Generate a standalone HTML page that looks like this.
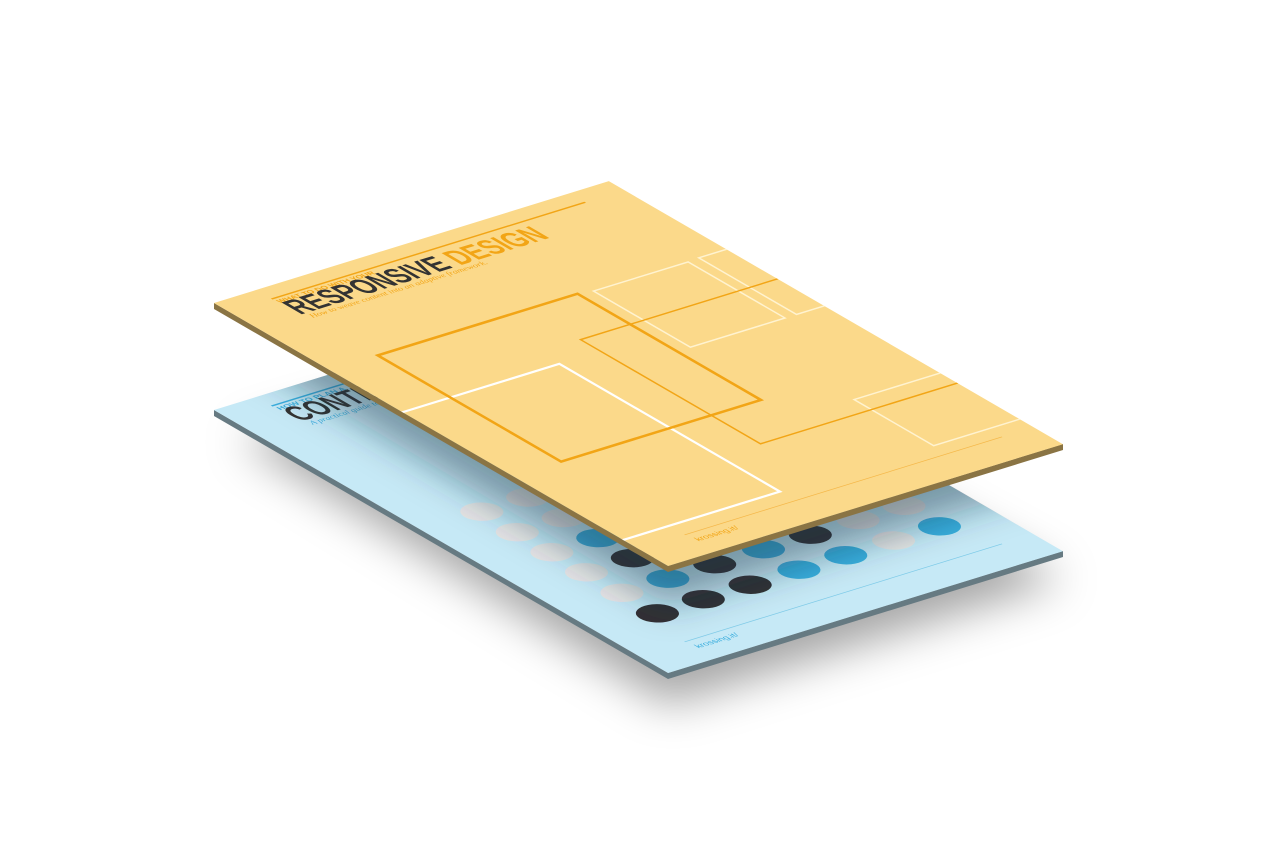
<!DOCTYPE html>
<html><head><meta charset="utf-8"><style>html,body{margin:0;padding:0;background:#fff;width:1280px;height:853px;overflow:hidden}</style></head>
<body>
<svg width="1280" height="853" viewBox="0 0 1280 853" xmlns="http://www.w3.org/2000/svg">
<defs>
<filter id="b1" x="-50%" y="-50%" width="200%" height="200%"><feGaussianBlur stdDeviation="22"/></filter>
<filter id="b2" x="-50%" y="-50%" width="200%" height="200%"><feGaussianBlur stdDeviation="18"/></filter>
<clipPath id="sheet"><rect x="0" y="0" width="413" height="525"/></clipPath>
<clipPath id="blueclip"><polygon points="214,410 609,288 1063,551 668,673"/></clipPath>
</defs>

<polygon points="240,440 609,330 1063,580 668,705" fill="rgba(0,0,0,0.35)" filter="url(#b1)"/>

<polygon points="214,410 668,673 1063,551 1063,557 668,679 214,416" fill="#667a82"/>
<g transform="matrix(0.956,-0.295,0.865,0.501,214,410)">
  <rect x="0" y="0" width="413" height="525" fill="#c6e9f6"/>
  <g clip-path="url(#sheet)">
    <line x1="44" y1="18" x2="372" y2="18" stroke="#3aaede" stroke-width="2"/>
    <text x="45" y="27" font-family="Liberation Sans, sans-serif" font-weight="bold" font-size="8" fill="#3aaede" textLength="70" lengthAdjust="spacingAndGlyphs">HOW TO PLAN A</text>
    <text x="45" y="50" font-family="Liberation Sans, sans-serif" font-weight="bold" font-size="34" fill="#333" textLength="262" lengthAdjust="spacingAndGlyphs">CONTENT STRATEGY</text>
    <text x="50" y="59" font-family="Liberation Serif, serif" font-style="italic" font-size="9" fill="#3aaede">A practical guide to success</text>
    <g fill="#e4e4e4">
      <ellipse cx="63" cy="240" rx="18" ry="15"/><ellipse cx="111" cy="240" rx="18" ry="15"/><ellipse cx="160" cy="240" rx="18" ry="15"/>
      <ellipse cx="63" cy="281" rx="18" ry="15"/><ellipse cx="111" cy="281" rx="18" ry="15"/>
      <ellipse cx="63" cy="321" rx="18" ry="15"/><ellipse cx="63" cy="361" rx="18" ry="15"/><ellipse cx="63" cy="402" rx="18" ry="15"/>
      <ellipse cx="310" cy="402" rx="18" ry="15"/><ellipse cx="310" cy="443" rx="18" ry="15"/><ellipse cx="358" cy="402" rx="18" ry="15"/>
      <ellipse cx="260" cy="361" rx="18" ry="15"/><ellipse cx="310" cy="361" rx="18" ry="15"/>
    </g>
    <g fill="#3aaede">
      <ellipse cx="111" cy="321" rx="18" ry="15"/><ellipse cx="111" cy="402" rx="18" ry="15"/>
      <ellipse cx="211" cy="402" rx="18" ry="15"/><ellipse cx="211" cy="443" rx="18" ry="15"/>
      <ellipse cx="260" cy="443" rx="18" ry="15"/><ellipse cx="358" cy="443" rx="18" ry="15"/>
      <ellipse cx="160" cy="321" rx="18" ry="15"/>
    </g>
    <g fill="#333033">
      <ellipse cx="111" cy="361" rx="18" ry="15"/><ellipse cx="111" cy="443" rx="18" ry="15"/>
      <ellipse cx="160" cy="402" rx="18" ry="15"/><ellipse cx="160" cy="443" rx="18" ry="15"/>
      <ellipse cx="260" cy="402" rx="18" ry="15"/><ellipse cx="63" cy="443" rx="18" ry="15"/>
    </g>
    <line x1="48" y1="491" x2="380" y2="491" stroke="#7fcbe8" stroke-width="1"/>
    <text x="50" y="505" font-family="Liberation Sans, sans-serif" font-size="9" fill="#3aaede">krossing.it/</text>
  </g>
</g>

<g clip-path="url(#blueclip)">
  <polygon points="214,335 609,215 1063,478 668,605" fill="rgba(20,50,70,0.45)" filter="url(#b2)"/>
</g>

<polygon points="214,303 668,566 1063,444 1063,450 668,572 214,309" fill="#8a7444"/>
<g transform="matrix(0.956,-0.295,0.865,0.501,214,303)">
  <rect x="0" y="0" width="413" height="525" fill="#fbd98a"/>
  <g clip-path="url(#sheet)">
    <line x1="44" y1="18" x2="372" y2="18" stroke="#f2a516" stroke-width="2"/>
    <text x="45" y="27" font-family="Liberation Sans, sans-serif" font-weight="bold" font-size="8" fill="#f2a516" textLength="100" lengthAdjust="spacingAndGlyphs">WHAT TO DO WITH YOUR</text>
    <text x="45" y="50" font-family="Liberation Sans, sans-serif" font-weight="bold" font-size="34" fill="#333" textLength="262" lengthAdjust="spacingAndGlyphs"><tspan>RESPONSIVE </tspan><tspan fill="#f2a516">DESIGN</tspan></text>
    <text x="50" y="59" font-family="Liberation Serif, serif" font-style="italic" font-size="9" fill="#f2a516">How to weave content into an adaptive framework.</text>
    <rect x="-20" y="218" width="184" height="255" fill="none" stroke="#fff" stroke-width="3"/>
    <rect x="273" y="137" width="99" height="112" fill="none" stroke="#fff3d0" stroke-width="2"/>
    <rect x="384" y="136" width="60" height="113" fill="none" stroke="#fff3d0" stroke-width="2"/>
    <rect x="323" y="383" width="120" height="92" fill="none" stroke="#fff3d0" stroke-width="2"/>
    <rect x="50" y="134" width="209" height="212" fill="none" stroke="#f2a516" stroke-width="3.5"/>
    <rect x="207" y="195" width="230" height="208" fill="none" stroke="#f2a516" stroke-width="2"/>
    <line x1="48" y1="491" x2="380" y2="491" stroke="#f5b84a" stroke-width="1"/>
    <text x="50" y="505" font-family="Liberation Sans, sans-serif" font-size="9" fill="#f2a516">krossing.it/</text>
  </g>
</g>
</svg>
</body></html>
